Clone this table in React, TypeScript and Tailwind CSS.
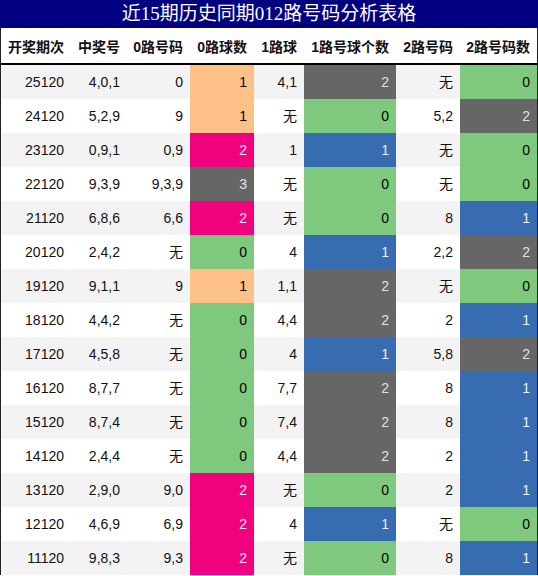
const COLS = 'grid grid-cols-[70px_56px_63px_64px_50px_92px_64px_77px]';

const headers = ['开奖期次', '中奖号', '0路号码', '0路球数', '1路球', '1路号球个数', '2路号码', '2路号码数'];

// [期次, 中奖号, 0路号码, 0路球数, 1路球, 1路个数, 2路号码, 2路个数]
const rows: [string, string, string, number, string, number, string, number][] = [
  ['25120', '4,0,1', '0', 1, '4,1', 2, '无', 0],
  ['24120', '5,2,9', '9', 1, '无', 0, '5,2', 2],
  ['23120', '0,9,1', '0,9', 2, '1', 1, '无', 0],
  ['22120', '9,3,9', '9,3,9', 3, '无', 0, '无', 0],
  ['21120', '6,8,6', '6,6', 2, '无', 0, '8', 1],
  ['20120', '2,4,2', '无', 0, '4', 1, '2,2', 2],
  ['19120', '9,1,1', '9', 1, '1,1', 2, '无', 0],
  ['18120', '4,4,2', '无', 0, '4,4', 2, '2', 1],
  ['17120', '4,5,8', '无', 0, '4', 1, '5,8', 2],
  ['16120', '8,7,7', '无', 0, '7,7', 2, '8', 1],
  ['15120', '8,7,4', '无', 0, '7,4', 2, '8', 1],
  ['14120', '2,4,4', '无', 0, '4,4', 2, '2', 1],
  ['13120', '2,9,0', '9,0', 2, '无', 0, '2', 1],
  ['12120', '4,6,9', '6,9', 2, '4', 1, '无', 0],
  ['11120', '9,8,3', '9,3', 2, '无', 0, '8', 1],
];

// 0路球数 column colours
const zeroColor: Record<number, string> = {
  0: 'bg-[#7fc97f] text-black',
  1: 'bg-[#fdc086] text-black',
  2: 'bg-[#f0027f] text-[#f2f2f2]',
  3: 'bg-[#666666] text-[#e0e0e0]',
};

// 1路 / 2路 count columns
const countColor: Record<number, string> = {
  0: 'bg-[#7fc97f] text-black',
  1: 'bg-[#386cb0] text-[#f0f0f0]',
  2: 'bg-[#666666] text-[#e0e0e0]',
};

const Cell = ({ children, className = '' }: { children: React.ReactNode; className?: string }) => (
  <div className={`flex h-[34px] items-center justify-end pr-[7px] pt-[1px] ${className}`}>{children}</div>
);

export default function App() {
  return (
    <div className="w-[538px] h-[576px] overflow-hidden bg-white font-['Liberation_Sans','Noto_Sans_CJK_SC',sans-serif] text-[14px] text-[#111]">
      <div className="flex h-[28px] items-center justify-center bg-[#000080] text-[19px] text-white font-['Liberation_Serif','Noto_Sans_CJK_SC',serif]">
        近15期历史同期012路号码分析表格
      </div>
      <div className="border-x border-[#222]">
        <div className={`${COLS} h-[37px] border-b-2 border-black font-bold`}>
          {headers.map((h) => (
            <div key={h} className="flex items-center justify-end pr-[7px] pt-[4px] whitespace-nowrap">
              {h}
            </div>
          ))}
        </div>
        {rows.map((r, i) => (
          <div key={r[0]} className={`${COLS} ${i % 2 === 0 ? 'bg-[#f3f3f3]' : 'bg-white'}`}>
            <Cell>{r[0]}</Cell>
            <Cell>{r[1]}</Cell>
            <Cell>{r[2]}</Cell>
            <Cell className={zeroColor[r[3]]}>{r[3]}</Cell>
            <Cell>{r[4]}</Cell>
            <Cell className={countColor[r[5]]}>{r[5]}</Cell>
            <Cell>{r[6]}</Cell>
            <Cell className={countColor[r[7]]}>{r[7]}</Cell>
          </div>
        ))}
      </div>
    </div>
  );
}
